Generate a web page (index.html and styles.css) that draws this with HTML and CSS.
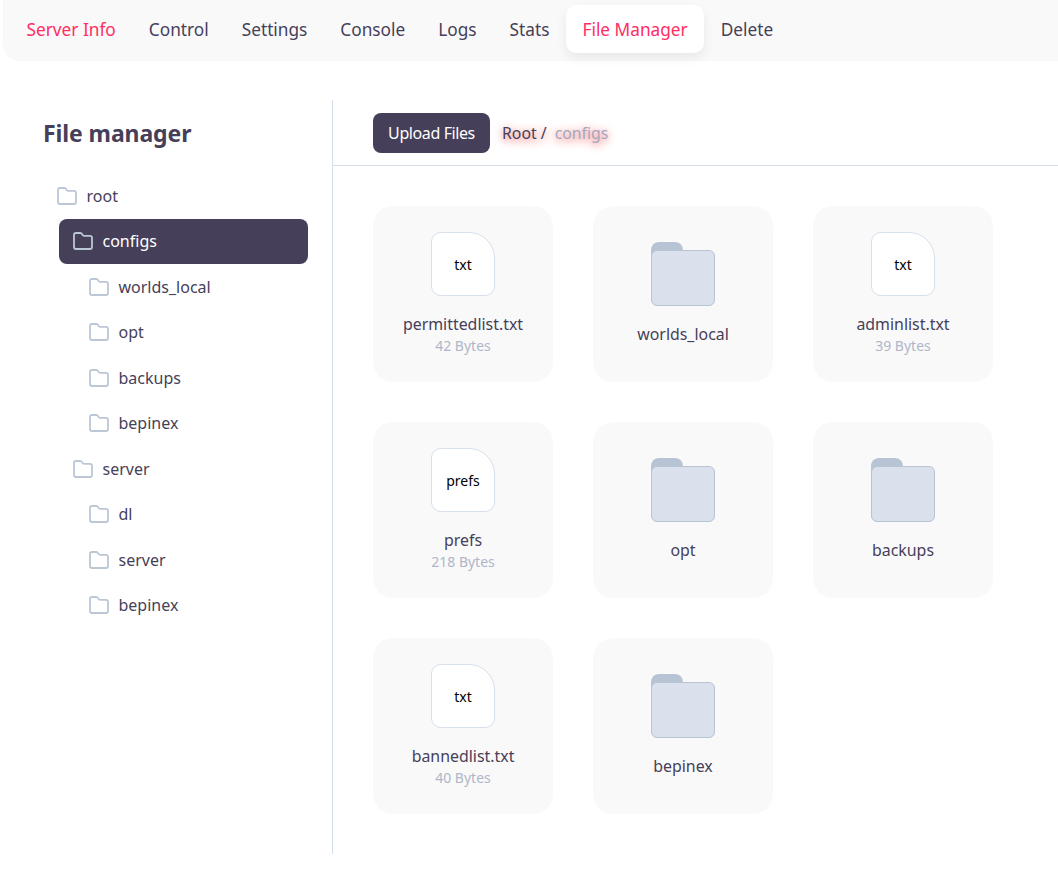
FILE: index.html
```html
<!DOCTYPE html>
<html lang="en">
<head>
<meta charset="utf-8">
<title>File Manager</title>
<link rel="stylesheet" href="styles.css">
</head>
<body>
<svg class="defs" width="0" height="0" aria-hidden="true">
  <symbol id="folder" viewBox="0 0 20 18">
    <path d="M3 1h4.200c.6 0 1.100.3 1.500.7l1.200 1.500c.3.4.8.6 1.300.6H17c1.100 0 2 .9 2 2V15c0 1.100-.9 2-2 2H3c-1.100 0-2-.9-2-2V3c0-1.100.9-2 2-2z" fill="none" stroke="currentColor" stroke-width="1.800" stroke-linejoin="round"/>
  </symbol>
</svg>
<nav class="tabs">
  <a class="tab tab-current">Server Info</a>
  <a class="tab">Control</a>
  <a class="tab">Settings</a>
  <a class="tab">Console</a>
  <a class="tab">Logs</a>
  <a class="tab">Stats</a>
  <a class="tab tab-active">File Manager</a>
  <a class="tab">Delete</a>
</nav>
<main class="manager">
  <aside class="sidebar">
    <h1 class="title">File manager</h1>
    <ul class="tree">
      <li class="row d0"><svg class="ficon"><use href="#folder"/></svg><span>root</span></li>
      <li class="row d1 selected"><svg class="ficon"><use href="#folder"/></svg><span>configs</span></li>
      <li class="row d2"><svg class="ficon"><use href="#folder"/></svg><span>worlds_local</span></li>
      <li class="row d2"><svg class="ficon"><use href="#folder"/></svg><span>opt</span></li>
      <li class="row d2"><svg class="ficon"><use href="#folder"/></svg><span>backups</span></li>
      <li class="row d2"><svg class="ficon"><use href="#folder"/></svg><span>bepinex</span></li>
      <li class="row d1"><svg class="ficon"><use href="#folder"/></svg><span>server</span></li>
      <li class="row d2"><svg class="ficon"><use href="#folder"/></svg><span>dl</span></li>
      <li class="row d2"><svg class="ficon"><use href="#folder"/></svg><span>server</span></li>
      <li class="row d2"><svg class="ficon"><use href="#folder"/></svg><span>bepinex</span></li>
    </ul>
  </aside>
  <section class="content">
    <header class="toolbar">
      <button class="upload">Upload Files</button>
      <div class="crumbs"><span class="crumb-root">Root /</span><span class="crumb-leaf">configs</span></div>
    </header>
    <div class="grid">
      <article class="card"><div class="file"><span>txt</span></div><div class="name">permittedlist.txt</div><div class="size">42 Bytes</div></article>
      <article class="card"><div class="folder"><div class="folder-front"></div></div><div class="name">worlds_local</div></article>
      <article class="card"><div class="file"><span>txt</span></div><div class="name">adminlist.txt</div><div class="size">39 Bytes</div></article>
      <article class="card"><div class="file"><span>prefs</span></div><div class="name">prefs</div><div class="size">218 Bytes</div></article>
      <article class="card"><div class="folder"><div class="folder-front"></div></div><div class="name">opt</div></article>
      <article class="card"><div class="folder"><div class="folder-front"></div></div><div class="name">backups</div></article>
      <article class="card"><div class="file"><span>txt</span></div><div class="name">bannedlist.txt</div><div class="size">40 Bytes</div></article>
      <article class="card"><div class="folder"><div class="folder-front"></div></div><div class="name">bepinex</div></article>
    </div>
  </section>
</main>
</body>
</html>
```
FILE: styles.css
```css
* { box-sizing: border-box; }
html, body { height: 100%; overflow: hidden; }
body {
  margin: 0;
  background: #fff;
  color: #463f5a;
  font-family: "Noto Sans", "Liberation Sans", sans-serif;
  font-size: 16px;
}
.defs { position: absolute; }

.tabs {
  display: flex;
  align-items: center;
  height: 61px;
  margin-left: 3px;
  padding: 5px 7px 8px;
  background: #f9f9f9;
  border-radius: 0 0 0 16px;
}
.tab {
  display: flex;
  align-items: center;
  height: 48px;
  padding: 0 16.5px;
  font-size: 17.250px;
  border-radius: 10px;
}
.tab-current { color: #ff2d63; }
.tab-active {
  color: #ff2d63;
  background: #fff;
  box-shadow: 0 5px 12px rgba(0, 0, 0, .07);
}

.manager {
  display: flex;
  margin-top: 39px;
  height: 754px;
}
.sidebar {
  flex: 0 0 333px;
  border-right: 1px solid #d5deea;
  padding-left: 43px;
}
.title {
  margin: 19px 0 0;
  height: 54px;
  font-size: 23px;
  line-height: 28px;
  font-weight: 700;
  letter-spacing: -.1px;
}
.tree {
  list-style: none;
  margin: 0;
  padding: 0;
}
.row {
  display: flex;
  align-items: center;
  gap: 9.5px;
  height: 45.5px;
  width: 265px;
  padding-left: 14px;
}
.d1 { margin-left: 16px; width: 249px; }
.d2 { margin-left: 32px; width: 233px; }
.selected {
  background: #463f5a;
  color: #fff;
  border-radius: 8px;
}
.ficon {
  width: 20px;
  height: 18px;
  flex: none;
  color: #bcc7d6;
}

.content { flex: 1; min-width: 0; }
.toolbar {
  display: flex;
  align-items: center;
  height: 66px;
  padding: 13px 0 13px 40px;
  border-bottom: 1px solid #d5deea;
}
.upload {
  height: 40px;
  width: 117px;
  padding: 0;
  border: 0;
  border-radius: 8px;
  background: #463f5a;
  color: #fff;
  font-family: inherit;
  font-size: 16px;
  letter-spacing: -.4px;
}
.crumbs {
  display: flex;
  gap: 8px;
  margin-left: 12px;
  padding-top: 1px;
  font-size: 15.800px;
  text-shadow: 0 2px 7px rgba(240, 70, 70, .6), 0 2px 11px rgba(240, 70, 70, .4);
}
.crumb-leaf { color: #a5a7c0; }

.grid {
  display: grid;
  grid-template-columns: repeat(3, 180px);
  grid-auto-rows: 176px;
  gap: 40px;
  padding: 40px 0 0 40px;
}
.card {
  display: flex;
  flex-direction: column;
  align-items: center;
  background: #f9f9f9;
  border-radius: 20px;
}
.file {
  display: flex;
  align-items: center;
  justify-content: center;
  width: 64px;
  height: 64px;
  margin-top: 26px;
  padding-top: 1px;
  background: #fff;
  border: 1px solid #d8e0ec;
  border-radius: 10px 26px 10px 10px;
  color: #000;
  font-size: 14px;
}
.folder {
  position: relative;
  width: 64px;
  height: 64px;
  margin-top: 36px;
}
.folder::before {
  content: "";
  position: absolute;
  left: 0;
  top: 0;
  width: 32px;
  height: 30px;
  background: #b6c4d3;
  border-radius: 8px;
}
.folder-front {
  position: absolute;
  left: 0;
  right: 0;
  top: 8px;
  bottom: 0;
  background: #dae1ec;
  border: 1px solid #b6c4d3;
  border-radius: 6px;
}
.name {
  margin-top: 16px;
  font-size: 15.900px;
  line-height: 24px;
}
.size {
  font-size: 14px;
  line-height: 20px;
  color: #b0b6c9;
}
```
